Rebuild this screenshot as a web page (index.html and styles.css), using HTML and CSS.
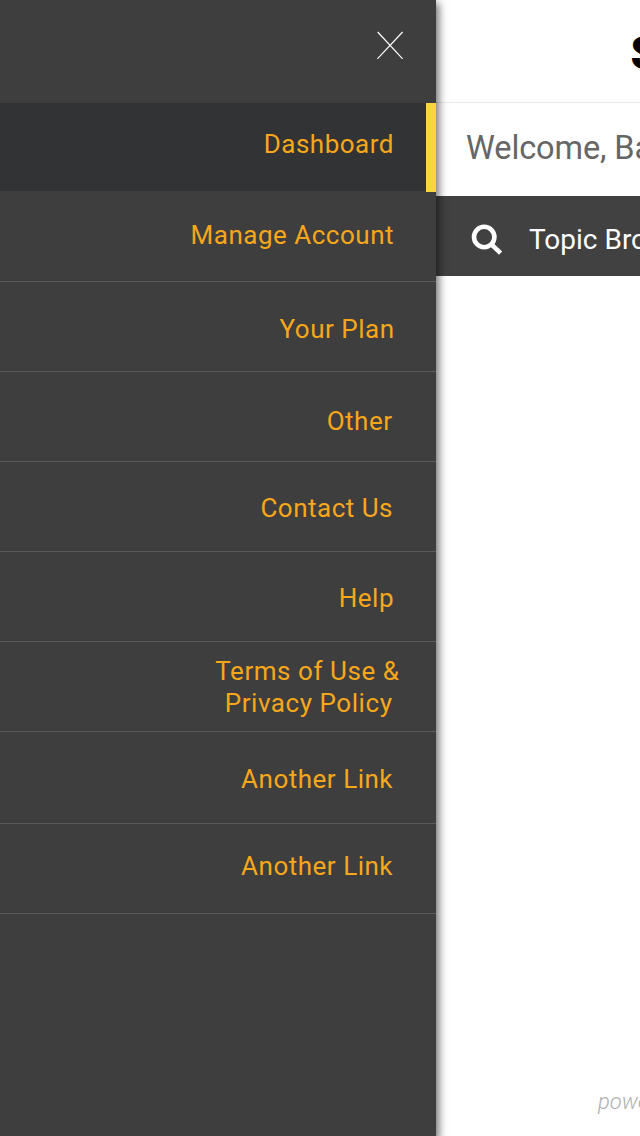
FILE: index.html
```html
<!DOCTYPE html>
<html lang="en">
<head>
<meta charset="utf-8">
<title>Dashboard</title>
<link rel="stylesheet" href="styles.css">
</head>
<body>
<div class="app">
  <nav class="drawer">
    <div class="drawer-head">
      <svg class="close" viewBox="0 0 28 28" aria-label="Close"><path d="M1.7 1 26.6 27.8M26.6 1 1.4 27.8"/></svg>
    </div>
    <a class="item active">Dashboard</a>
    <a class="item manage">Manage Account</a>
    <a class="item plan">Your Plan</a>
    <a class="item other">Other</a>
    <a class="item contact">Contact Us</a>
    <a class="item help">Help</a>
    <a class="item terms"><span class="first-line">Terms of Use &amp;</span><span>Privacy Policy</span></a>
    <a class="item link">Another Link</a>
    <a class="item last">Another Link</a>
  </nav>
  <main class="page">
    <header class="brand"><span>S</span></header>
    <div class="welcome">Welcome, Ba</div>
    <div class="topics">
      <svg class="search" viewBox="0 0 32 32"><circle cx="13.2" cy="13" r="10.2"/><path d="M20.4 20.4 29.6 29.2"/></svg>
      <span>Topic Bro</span>
    </div>
    <footer class="footer">powe</footer>
  </main>
</div>
</body>
</html>
```

FILE: styles.css
```css
body { margin: 0; font-family: Roboto, "Liberation Sans", sans-serif; }
.app { display: flex; width: 640px; height: 1136px; overflow: hidden; background: #fff; }
.drawer {
  position: relative; z-index: 1; box-sizing: border-box; flex: none;
  width: 436px; height: 1136px; background: #3d3e3d;
  box-shadow: 2px 4px 8px 1px rgba(0, 0, 0, 0.55);
}
.drawer-head { box-sizing: border-box; height: 103px; padding: 31px 32px 0 0; display: flex; justify-content: flex-end; }
.close { width: 28px; height: 28px; fill: none; stroke: #fff; stroke-width: 1.2; }
.item {
  box-sizing: border-box; display: flex; flex-direction: column; align-items: flex-end;
  height: 90px; padding-right: 43px; border-bottom: 1px solid #595a5a;
  color: #f8a71b; font-size: 26px; line-height: 32px; letter-spacing: 0.5px; white-space: nowrap;
}
.active {
  height: 89px; padding: 25px 32px 0 0; border-bottom: 0; border-right: 10px solid #fad53d;
  background: linear-gradient(#323335 88px, #3d3e3d 88px);
}
.manage { padding-top: 27px; padding-right: 42px; }
.plan { padding-top: 31px; padding-right: 41.5px; }
.other { padding-top: 33px; padding-right: 43.5px; }
.contact { padding-top: 30px; }
.help { padding-top: 30px; padding-right: 42px; }
.terms { padding-top: 13px; padding-right: 43.5px; letter-spacing: 0.55px; }
.first-line { margin-right: -7px; }
.link { height: 92px; padding-top: 31px; }
.last { padding-top: 26px; }
.page { flex: none; width: 204px; display: flex; flex-direction: column; overflow: hidden; white-space: nowrap; }
.brand {
  box-sizing: border-box; height: 103px; padding: 25px 0 0 194.5px; overflow: hidden;
  border-bottom: 1px solid #e9e9e9; color: #000; font-size: 46px; font-weight: 900; line-height: 56px;
}
.welcome { box-sizing: border-box; height: 93px; padding: 25px 0 0 30px; color: #666; font-size: 32.5px; line-height: 40px; letter-spacing: -0.1px; }
.topics {
  box-sizing: border-box; height: 80px; padding: 0 0 0 35px; display: flex; align-items: center; gap: 26px;
  background: #414141; color: #fff; font-size: 28px; line-height: 32px;
}
.topics span { padding-top: 7px; }
.search { width: 32px; height: 32px; margin-top: 8px; flex: none; fill: none; stroke: #fff; stroke-width: 4.6; }
.footer { margin-top: auto; padding: 0 0 20px 162px; color: #b0b0b0; font-size: 22px; font-style: italic; font-weight: 300; line-height: 28px; }
```
